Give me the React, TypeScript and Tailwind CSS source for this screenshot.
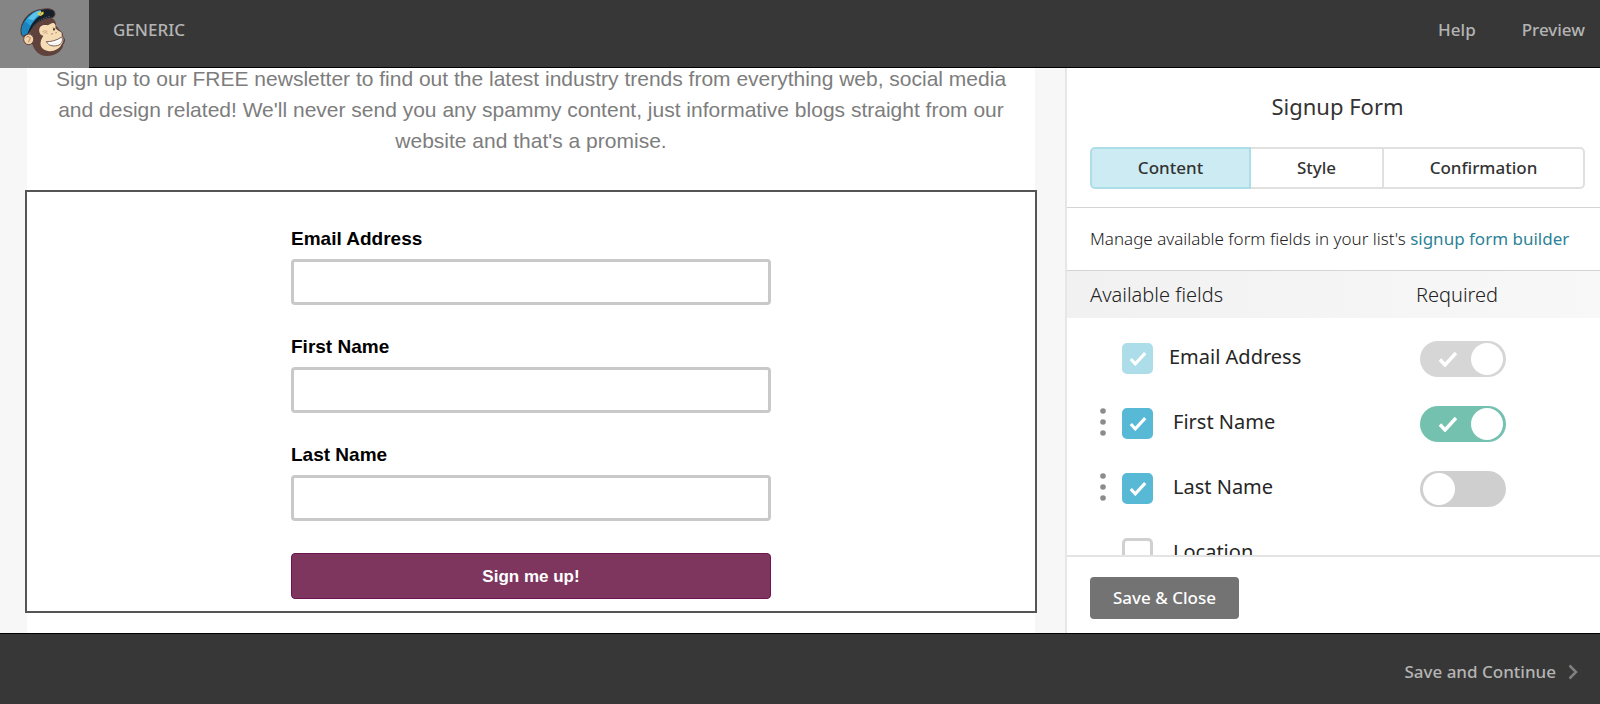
import { useState } from "react";

interface Field {
  id: string;
  label: string;
  enabled: boolean;
  required: boolean;
  locked?: boolean;
  draggable?: boolean;
  canRequire?: boolean;
}

const initialFields: Field[] = [
  { id: "email", label: "Email Address", enabled: true, required: true, locked: true, canRequire: true },
  { id: "first", label: "First Name", enabled: true, required: true, draggable: true, canRequire: true },
  { id: "last", label: "Last Name", enabled: true, required: false, draggable: true, canRequire: true },
  { id: "location", label: "Location", enabled: false, required: false },
];

const tabs = [
  { name: "Content", width: "w-[161px]" },
  { name: "Style", width: "w-[133px]" },
  { name: "Confirmation", width: "flex-1" },
];

function Logo() {
  return (
    <svg viewBox="54 20 150 153" className="h-[51px] w-[50px]" aria-hidden="true">
      {/* head */}
      <path
        d="M92 92 C98 68 122 52 152 52 C162 54 169 64 168 76 C176 84 180 92 188 97 C189 103 187 107 192 112 C198 118 195 126 190 132 C189 150 170 167 140 167 C118 167 104 152 98 134 C90 124 88 106 92 92Z"
        fill="#5f423c"
      />
      {/* face */}
      <path
        d="M118 94 C115 80 126 72 138 74 C146 76 150 70 158 68 C166 68 168 76 166 84 C172 90 178 93 185 97 C186 102 183 106 188 111 C193 118 189 126 185 132 C178 147 160 155 144 152 C128 149 119 138 122 124 C123 116 128 111 130 106 C122 105 119 99 118 94Z"
        fill="#f6dcb4"
      />
      <path d="M127 94 Q133 89 142 93 M130 99 Q137 95 143 99" fill="none" stroke="#b88d6d" strokeWidth="2" />
      <path d="M158 80 q5 3 4 10" fill="none" stroke="#b88d6d" strokeWidth="2" />
      <ellipse cx="162" cy="87" rx="2.5" ry="4" fill="#3b2624" />
      <path d="M153 102 q3 -4 6 -1 M166 98 q3 -3 5 0" fill="none" stroke="#8a6350" strokeWidth="2" />
      {/* grin */}
      <path
        d="M139 124 C150 125 172 120 185 110 C190 118 187 129 177 134 C164 139 146 138 139 124Z"
        fill="#fff"
        stroke="#5f423c"
        strokeWidth="2.5"
      />
      <path d="M143 131 C156 134 174 130 186 120" fill="none" stroke="#d9d2cf" strokeWidth="1.5" />
      {/* ear */}
      <ellipse cx="86" cy="117" rx="15" ry="16" fill="#f3d3aa" stroke="#5f423c" strokeWidth="3" />
      <path d="M79 111 C86 105 94 112 89 118 C87 121 88 124 84 125" fill="none" stroke="#a9765a" strokeWidth="3" />
      {/* cap */}
      <path
        d="M63 96 C60 66 86 30 126 27 C146 23 166 26 165 42 C164 50 158 53 148 54 C124 57 102 74 88 98 L70 109 C65 106 63 101 63 96Z"
        fill="#15202b"
        stroke="#5f423c"
        strokeWidth="3"
      />
      <path d="M65 94 C64 68 90 33 121 30 C127 35 126 41 119 46 C103 57 90 76 83 98 L70 106 C66 102 65 98 65 94Z" fill="#2a9fd8" />
      <path d="M84 55 C94 42 106 34 121 30 C125 34 123 40 118 43 C110 48 104 54 99 60Z" fill="#5cc3ea" />
      <path d="M65 88 C66 77 70 69 75 62 L91 76 C87 84 84 92 83 98 L70 106 C66 101 65 95 65 88Z" fill="#1b83bd" />
      <path d="M99 80 C110 64 128 53 150 48" fill="none" stroke="#64727d" strokeWidth="2" strokeDasharray="5 3" />
      <path d="M112 34 l6 4 l2 -7 l4 6 l6 -4 l1 8 l-9 6 l-7 -3z" fill="#f2cf3d" />
      <circle cx="121" cy="41" r="2" fill="#2a9fd8" />
    </svg>
  );
}

function CheckMark({ className }: { className: string }) {
  return (
    <svg viewBox="0 0 20 16" className={className} fill="none" stroke="currentColor" strokeWidth="3.4" aria-hidden="true">
      <path d="M2 8.5 L7 14 L18 2" />
    </svg>
  );
}

function DragHandle() {
  return (
    <svg viewBox="0 0 6 28" className="h-7 w-[6px]" fill="#8c8c8c" aria-hidden="true">
      <circle cx="3" cy="3" r="2.8" />
      <circle cx="3" cy="14" r="2.8" />
      <circle cx="3" cy="25" r="2.8" />
    </svg>
  );
}

interface ToggleProps {
  label: string;
  checked: boolean;
  disabled?: boolean;
  onChange: () => void;
}

function Toggle({ label, checked, disabled, onChange }: ToggleProps) {
  return (
    <span className="relative block h-9 w-[86px]">
      <input
        type="checkbox"
        role="switch"
        aria-label={`${label} required`}
        checked={checked}
        disabled={disabled}
        onChange={onChange}
        className="block h-full w-full appearance-none rounded-full bg-[#cfcfcf] checked:bg-[#74c1af] disabled:bg-[#d6d6d6]"
      />
      {checked && <CheckMark className="pointer-events-none absolute top-[10px] left-[18px] h-4 w-5 text-white" />}
      <span
        className={`pointer-events-none absolute top-[2px] size-8 rounded-full bg-white ${checked ? "right-[3px]" : "left-[3px]"}`}
      />
    </span>
  );
}

function FormField({ id, label }: { id: string; label: string }) {
  return (
    <div className="flex flex-col gap-[10px]">
      <label htmlFor={id} className="text-[19px] leading-5 font-bold text-black">
        {label}
      </label>
      <input id={id} type="text" className="h-[46px] w-full rounded-[4px] border-[3px] border-[#c9c9c9] bg-white px-3 outline-none" />
    </div>
  );
}

export default function App() {
  const [fields, setFields] = useState(initialFields);
  const [activeTab, setActiveTab] = useState("Content");

  const flip = (id: string, key: "enabled" | "required") => {
    setFields((prev) => prev.map((f) => (f.id === id ? { ...f, [key]: !f[key] } : f)));
  };

  return (
    <div className="flex h-screen flex-col bg-[#f7f7f7] font-['Noto_Sans','Open_Sans',sans-serif] text-[#333]">
      {/* Top bar */}
      <header className="flex h-[68px] shrink-0 bg-[#373737] text-[17px] leading-6 font-medium text-[#b4b4b4]">
        <a href="#" aria-label="Home" className="w-[89px] bg-[#858585] pt-[7px] pl-[18px]">
          <Logo />
        </a>
        <div className="flex flex-1 items-start justify-between border-b border-black pt-[18px] pr-[15px] pl-6">
          <span>GENERIC</span>
          <nav className="flex gap-[46px]">
            <a href="#">Help</a>
            <a href="#">Preview</a>
          </nav>
        </div>
      </header>

      <div className="flex min-h-0 flex-1">
        {/* Form preview, scrolled to its end */}
        <main className="flex min-w-0 flex-1 flex-col justify-end overflow-hidden pr-7 pl-[25px] font-['Liberation_Sans',Arial,sans-serif]">
          <div className="mx-[2px] bg-white px-6 pb-[34px]">
            <p className="text-center text-[21px] leading-[31px] text-[#7d7d7d]">
              Sign up to our FREE newsletter to find out the latest industry trends from everything web, social media and
              design related! We'll never send you any spammy content, just informative blogs straight from our website and
              that's a promise.
            </p>
          </div>
          <form
            onSubmit={(e) => e.preventDefault()}
            className="flex flex-col items-center border-2 border-[#555] bg-white pt-[37px] pb-3"
          >
            <div className="flex w-full max-w-[480px] flex-col gap-8">
              <FormField id="preview-email" label="Email Address" />
              <FormField id="preview-first" label="First Name" />
              <FormField id="preview-last" label="Last Name" />
              <button
                type="submit"
                className="h-[46px] rounded-[4px] border border-[#6d1550] bg-[#7e365f] pt-[2px] text-[17px] font-bold text-white"
              >
                Sign me up!
              </button>
            </div>
          </form>
          <div className="mx-[2px] h-5 shrink-0 bg-white" />
        </main>

        {/* Settings panel */}
        <aside className="flex w-[535px] shrink-0 flex-col border-l-2 border-[#e6e6e6] bg-white">
          <div className="border-b border-[#d4d4d4] pt-6 pr-[15px] pb-[18px] pl-[23px]">
            <h1 className="text-center text-[22px] leading-7">Signup Form</h1>
            <div role="tablist" className="mt-[27px] flex h-[42px] text-[17px] font-medium">
              {tabs.map((tab) => {
                const active = tab.name === activeTab;
                return (
                  <button
                    key={tab.name}
                    role="tab"
                    aria-selected={active}
                    onClick={() => setActiveTab(tab.name)}
                    className={`${tab.width} border-2 border-l-0 first:rounded-l-[5px] first:border-l-2 last:rounded-r-[5px] ${
                      active ? "border-[#acdde9] bg-[#cdebf3]" : "border-[#e0e0e0] bg-white"
                    }`}
                  >
                    {tab.name}
                  </button>
                );
              })}
            </div>
          </div>

          <p className="border-b border-[#d4d4d4] py-[19px] pl-[23px] text-[17px] leading-6 font-light whitespace-nowrap text-[#222]">
            Manage available form fields in your list's{" "}
            <a href="#" className="font-normal text-[#2c8297]">
              signup form builder
            </a>
          </p>

          <div className="min-h-0 flex-1 overflow-hidden">
            <table className="w-full table-fixed border-collapse text-left">
              <thead>
                <tr className="h-[47px] bg-gradient-to-r from-[#f1f1f1] to-[#f8f8f8] text-[20px] leading-6 text-[#222]">
                  <th scope="col" className="pl-[23px] font-light">
                    Available fields
                  </th>
                  <th scope="col" className="w-[184px] font-light">
                    Required
                  </th>
                </tr>
              </thead>
              <tbody>
                {fields.map((field) => (
                  <tr key={field.id} className="h-[65px] align-top">
                    <td className="pt-[25px] pl-[33px]">
                      <div className="flex items-start">
                        <span className="w-[22px]">{field.draggable && <DragHandle />}</span>
                        <span className="relative size-[31px]">
                          <input
                            id={`field-${field.id}`}
                            type="checkbox"
                            checked={field.enabled}
                            disabled={field.locked}
                            onChange={() => flip(field.id, "enabled")}
                            className="block size-full appearance-none rounded-[5px] border-[3px] border-[#d0d0d0] bg-white checked:border-[#58b9d6] checked:bg-[#58b9d6] disabled:border-[#addde9] disabled:bg-[#addde9]"
                          />
                          {field.enabled && (
                            <CheckMark className="pointer-events-none absolute top-2 left-[7px] h-[15px] w-[18px] text-white" />
                          )}
                        </span>
                        <label
                          htmlFor={`field-${field.id}`}
                          className={`text-[20px] leading-7 text-[#262626] ${field.locked ? "pl-4" : "pl-5"}`}
                        >
                          {field.label}
                        </label>
                      </div>
                    </td>
                    <td className="pt-[23px] pl-1">
                      {field.canRequire && (
                        <Toggle
                          label={field.label}
                          checked={field.required}
                          disabled={field.locked}
                          onChange={() => flip(field.id, "required")}
                        />
                      )}
                    </td>
                  </tr>
                ))}
              </tbody>
            </table>
          </div>

          <div className="border-t-2 border-[#e4e4e4] pt-5 pb-[14px] pl-[23px]">
            <button className="h-[42px] rounded-[4px] bg-[#737373] px-[23px] text-[17px] font-medium text-white">
              Save &amp; Close
            </button>
          </div>
        </aside>
      </div>

      {/* Bottom bar */}
      <footer className="flex h-[71px] shrink-0 items-center justify-end border-t border-black bg-[#373737] pt-[5px] pr-[22px]">
        <button className="flex items-center gap-3 text-[17px] leading-6 font-medium text-[#b4b4b4]">
          Save and Continue
          <svg viewBox="0 0 10 16" className="h-4 w-[10px]" fill="none" stroke="#808080" strokeWidth="2.5" aria-hidden="true">
            <path d="M1.5 1.5 L8 8 L1.5 14.5" />
          </svg>
        </button>
      </footer>
    </div>
  );
}
